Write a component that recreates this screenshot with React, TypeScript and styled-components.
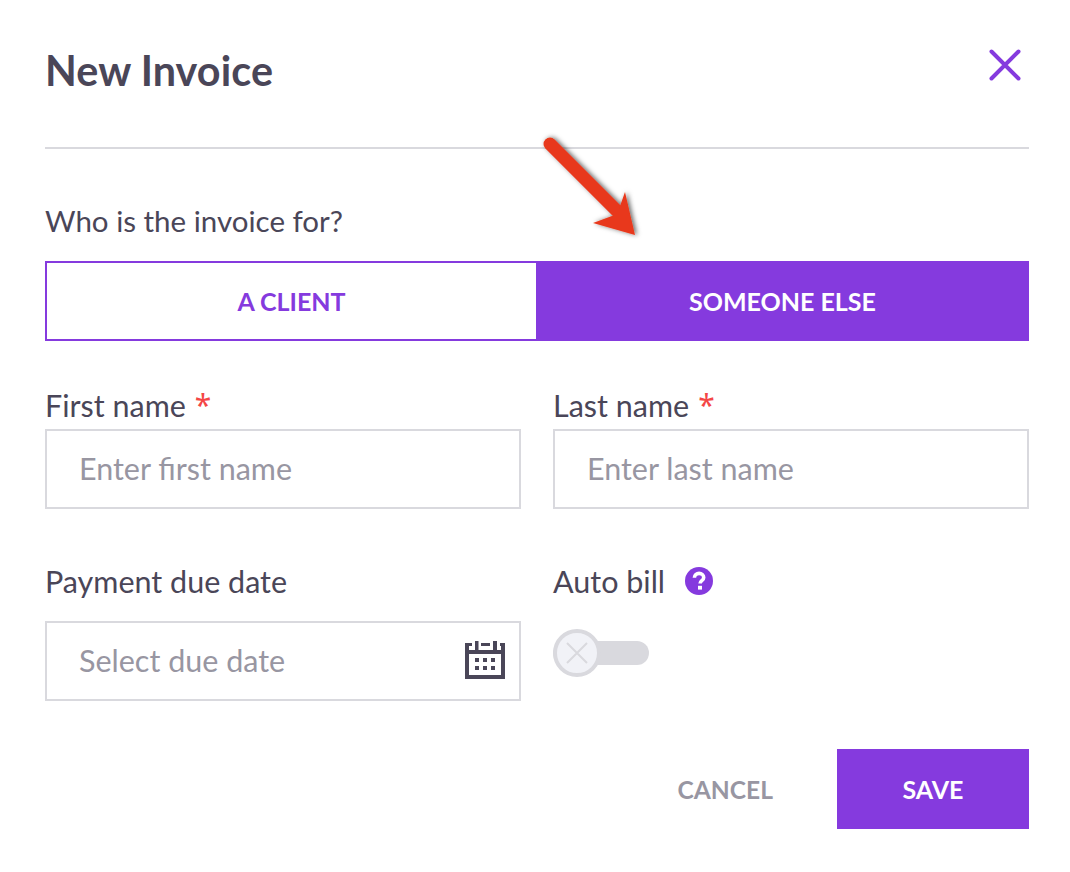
import React from "react";
import styled, { createGlobalStyle } from "styled-components";

const Global = createGlobalStyle`
  html, body { margin: 0; padding: 0; background: #fff; }
  body { font-family: "Lato", "Noto Sans", sans-serif; color: #4a4658; }
`;

const purple = "#853ade";
const line = "#d9d9de";

const Modal = styled.div`
  position: relative;
  width: 1070px;
  height: 872px;
  box-sizing: border-box;
  padding: 0 41px 0 45px;
  overflow: hidden;
`;

const Header = styled.header`
  height: 147px;
  display: flex;
  justify-content: space-between;
  border-bottom: 2px solid ${line};
`;

const Title = styled.h1`
  margin: 46px 0 0 0;
  font-size: 41.3px;
  line-height: 48px;
  font-weight: 700;
  letter-spacing: 0.1px;
  color: #4a4658;
`;

const CloseButton = styled.button`
  margin: 44px 3px 0 0;
  padding: 0;
  width: 42px;
  height: 42px;
  border: 0;
  background: none;
  display: flex;
`;

const Question = styled.div`
  margin: 54px 0 0;
  font-size: 29.5px;
  line-height: 36px;
  height: 36px;
`;

const Segments = styled.div`
  margin-top: 22px;
  display: grid;
  grid-template-columns: 491px 493px;
  height: 80px;
`;

const Segment = styled.button<{ $active?: boolean }>`
  box-sizing: border-box;
  border: 2px solid ${purple};
  border-right-width: ${(p) => (p.$active ? "2px" : "0")};
  background: ${(p) => (p.$active ? purple : "#fff")};
  color: ${(p) => (p.$active ? "#fff" : purple)};
  font-family: inherit;
  font-size: 25px;
  font-weight: 700;
  padding: 0;
`;

const Grid = styled.div`
  display: grid;
  grid-template-columns: 476px 476px;
  column-gap: 32px;
`;

const Field = styled.div<{ $top: number; $gap: number }>`
  margin-top: ${(p) => p.$top}px;
  display: flex;
  flex-direction: column;
  gap: ${(p) => p.$gap}px;
`;

const Label = styled.label`
  display: flex;
  align-items: center;
  height: 36px;
  font-size: 30.5px;
  line-height: 36px;
`;

const Star = styled.span`
  color: #f44646;
  margin-left: 9px;
  font-family: "Noto Sans", sans-serif;
  font-size: 30px;
  line-height: 36px;
`;

const HelpIcon = styled.svg`
  margin-left: 20px;
  width: 28px;
  height: 28px;
`;

const InputBox = styled.div`
  box-sizing: border-box;
  height: 80px;
  border: 2px solid ${line};
  display: flex;
  align-items: center;
  justify-content: space-between;
  padding: 0 13px 2px 32px;
  font-size: 30.5px;
  color: #9896a2;
`;

const Toggle = styled.div`
  position: relative;
  margin-top: 10px;
  width: 96px;
  height: 48px;
  display: flex;
  align-items: center;
`;

const Track = styled.div`
  width: 96px;
  height: 24px;
  border-radius: 12px;
  background: ${line};
`;

const Knob = styled.div`
  position: absolute;
  left: 0;
  top: 0;
  box-sizing: border-box;
  width: 48px;
  height: 48px;
  border-radius: 50%;
  border: 4px solid ${line};
  background: #f1f2f7;
  display: flex;
  align-items: center;
  justify-content: center;
`;

const Footer = styled.footer`
  margin-top: 48px;
  display: flex;
  justify-content: flex-end;
  align-items: center;
`;

const Cancel = styled.button`
  margin-right: 64px;
  padding: 0;
  border: 0;
  background: none;
  font-family: inherit;
  font-size: 24.6px;
  font-weight: 700;
  color: #9896a2;
`;

const Save = styled.button`
  width: 192px;
  height: 80px;
  padding: 0;
  border: 0;
  background: ${purple};
  color: #fff;
  font-family: inherit;
  font-size: 25px;
  font-weight: 700;
`;

const Arrow = styled.svg`
  position: absolute;
  left: 520px;
  top: 120px;
  width: 140px;
  height: 130px;
  overflow: visible;
`;

export default function App() {
  return (
    <Modal>
      <Global />
      <Header>
        <Title>New Invoice</Title>
        <CloseButton aria-label="Close">
          <svg width="42" height="42" viewBox="0 0 42 42">
            <path d="M7.5 7.5 L34.5 34.5 M34.5 7.5 L7.5 34.5" stroke={purple} strokeWidth="4" strokeLinecap="round" />
          </svg>
        </CloseButton>
      </Header>

      <Question>Who is the invoice for?</Question>
      <Segments>
        <Segment>A CLIENT</Segment>
        <Segment $active>SOMEONE ELSE</Segment>
      </Segments>

      <Grid>
        <Field $top={46} $gap={6}>
          <Label>
            First name<Star>*</Star>
          </Label>
          <InputBox>Enter first name</InputBox>
        </Field>
        <Field $top={46} $gap={6}>
          <Label>
            Last name<Star>*</Star>
          </Label>
          <InputBox>Enter last name</InputBox>
        </Field>
        <Field $top={54} $gap={22}>
          <Label>Payment due date</Label>
          <InputBox>
            Select due date
            <svg width="42" height="40" viewBox="0 0 42 40">
              <path
                fill="#4a4658"
                d="M1 3h7v3H5v4h6V1h3.5v9H29V1h4v9h4V6h-1V3h5v36H1zM17 3h9v3h-9zM5 14v21h32V14z"
                fillRule="evenodd"
              />
              <path fill="#4a4658" d="M11 18h4v4h-4zM19 18h4v4h-4zM27 18h4v4h-4zM11 26h4v4h-4zM19 26h4v4h-4zM27 26h4v4h-4z" />
            </svg>
          </InputBox>
        </Field>
        <Field $top={54} $gap={20}>
          <Label>
            Auto bill
            <HelpIcon viewBox="0 0 28 28">
              <circle cx="14" cy="14" r="14" fill={purple} />
              <path d="M9.4 10.8c0-2.8 2.1-4.4 4.7-4.4s4.6 1.6 4.6 4c0 3.4-3.6 3.2-3.6 6.2" fill="none" stroke="#fff" strokeWidth="3.6" />
              <rect x="13" y="18.8" width="4" height="3.8" fill="#fff" />
            </HelpIcon>
          </Label>
          <Toggle>
            <Track />
            <Knob>
              <svg width="26" height="26" viewBox="0 0 26 26">
                <path d="M3 3 L23 23 M23 3 L3 23" stroke={line} strokeWidth="2" />
              </svg>
            </Knob>
          </Toggle>
        </Field>
      </Grid>

      <Footer>
        <Cancel>CANCEL</Cancel>
        <Save>SAVE</Save>
      </Footer>

      <Arrow viewBox="0 0 140 130">
        <defs>
          <filter id="arrowShadow" x="-30%" y="-30%" width="160%" height="160%">
            <feDropShadow dx="2" dy="0" stdDeviation="2.5" floodColor="#000" floodOpacity="0.6" />
          </filter>
        </defs>
        <g filter="url(#arrowShadow)">
          <path d="M30 24 L96 90" stroke="#e8391a" strokeWidth="13" strokeLinecap="round" />
          <path d="M73 103 L92 96 L99 89 L105 72 L115 115 Z" fill="#e8391a" />
        </g>
      </Arrow>
    </Modal>
  );
}
